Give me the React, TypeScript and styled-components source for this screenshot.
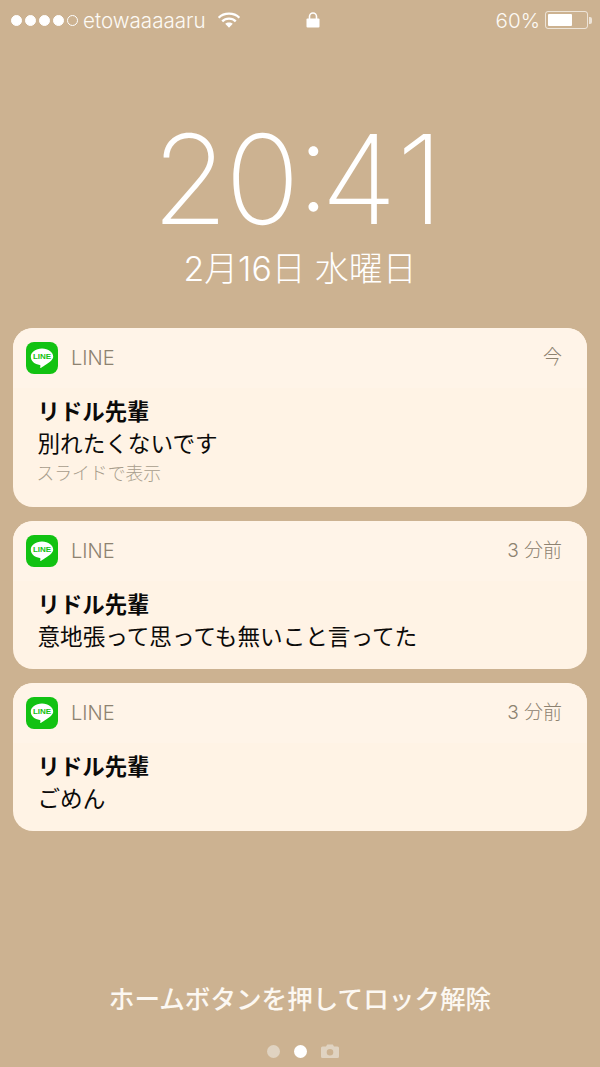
import React from "react";
import styled, { createGlobalStyle } from "styled-components";

const Global = createGlobalStyle`
  html, body { margin: 0; padding: 0; background: #ccb291; }
  body { font-family: "Inter", "Noto Sans CJK JP", sans-serif; }
`;

const Screen = styled.div`
  width: 600px;
  height: 1067px;
  background: #ccb291;
  color: #fff;
  display: flex;
  flex-direction: column;
  overflow: hidden;
`;

const StatusBar = styled.div`
  height: 40px;
  padding: 0 8px 0 11px;
  display: grid;
  grid-template-columns: 295px auto 1fr;
  align-items: center;
  font-size: 20.6px;
  font-weight: 300;
  color: #fdfaf5;
`;

const StatusLeft = styled.div`
  display: flex;
  align-items: center;
`;

const StatusRight = styled.div`
  display: flex;
  align-items: center;
  justify-content: flex-end;
`;

const Dot = styled.span<{ $on: boolean }>`
  width: 11px;
  height: 11px;
  margin-right: 3px;
  border-radius: 50%;
  box-sizing: border-box;
  border: 1px solid #fff;
  background: ${(p) => (p.$on ? "#fff" : "transparent")};
`;

const Carrier = styled.span`
  margin: 0 11px 0 2px;
`;

const Percent = styled.span`
  margin-right: 5px;
`;

const Battery = styled.span`
  width: 43px;
  height: 18px;
  box-sizing: border-box;
  border: 1.5px solid rgba(255, 255, 255, 0.65);
  border-radius: 3px;
  padding: 2px;
  display: flex;
`;

const BatteryFill = styled.span`
  width: 24px;
  background: #fff;
  border-radius: 1px;
`;

const BatteryTip = styled.span`
  width: 3px;
  height: 7px;
  margin-left: 1px;
  border-radius: 0 2px 2px 0;
  background: rgba(255, 255, 255, 0.65);
`;

const Clock = styled.div`
  margin-top: 76px;
  height: 126px;
  line-height: 126px;
  padding-right: 8px;
  text-align: center;
  font-family: "Inter", sans-serif;
  font-size: 124px;
  font-weight: 200;
  letter-spacing: -3.5px;
  font-feature-settings: "case";
`;

const ClockColon = styled.span`
  margin-right: -6px;
`;

const ClockOne = styled.span`
  margin-left: 3px;
`;

const DateLine = styled.div`
  margin-top: 5px;
  height: 44px;
  line-height: 44px;
  text-align: center;
  font-family: "Inter", "Noto Sans CJK JP", sans-serif;
  font-size: 33.8px;
  font-weight: 300;
`;

const List = styled.div`
  margin-top: 37px;
  padding: 0 13px;
  display: flex;
  flex-direction: column;
  gap: 14px;
`;

const Card = styled.div`
  background: #fff3e5;
  border-radius: 20px;
  overflow: hidden;
  color: #0b0a09;
`;

const CardHead = styled.div`
  height: 60px;
  padding: 0 25px 0 13px;
  display: flex;
  align-items: center;
  background: #fff4e8;
  color: #8d8270;
`;

const AppName = styled.span`
  margin-left: 13px;
  flex: 1;
  font-size: 20px;
  font-weight: 300;
`;

const When = styled.span`
  margin-bottom: 6px;
  font-size: 19px;
  font-weight: 300;
  font-family: "Inter", "Noto Sans CJK JP", sans-serif;
`;

const CardBody = styled.div`
  padding: 8px 25px 17px 24.5px;
`;

const Sender = styled.div`
  height: 32px;
  line-height: 32px;
  font-size: 22.4px;
  font-weight: 700;
`;

const Message = styled.div`
  height: 31px;
  line-height: 31px;
  font-size: 22.6px;
  font-weight: 400;
`;

const Hint = styled.div`
  height: 31px;
  line-height: 29px;
  margin-left: -1px;
  font-size: 17.8px;
  font-weight: 300;
  color: #a89d8c;
`;

const Unlock = styled.div`
  margin-top: auto;
  height: 40px;
  line-height: 40px;
  text-align: center;
  font-size: 25.6px;
  font-weight: 500;
  color: #fcf8f2;
`;

const Pager = styled.div`
  height: 32px;
  display: flex;
  justify-content: center;
  align-items: center;
  gap: 14px;
  padding-left: 5px;
  margin-top: 15px;
`;

const PageDot = styled.span<{ $on?: boolean }>`
  width: 13px;
  height: 13px;
  border-radius: 50%;
  background: ${(p) => (p.$on ? "#fff" : "#e0d3c1")};
`;

const LineIcon = () => (
  <svg width="32" height="32" viewBox="0 0 32 32">
    <rect width="32" height="32" rx="8" fill="#12c212" />
    <path
      d="M16 6.500c-6.400 0-11.200 3.700-11.200 8.300 0 4.100 3.800 7.500 9 8.200.5.100.7.400.6 1l-.2 1.300c-.100.600.4.800 1 .4 2.400-1.400 8.200-5 10.300-7.400 1.100-1.300 1.700-2.400 1.700-3.500 0-4.600-4.800-8.300-11.200-8.300z"
      fill="#fff"
    />
    <text
      x="16"
      y="17.400"
      textAnchor="middle"
      fontFamily="Liberation Sans, sans-serif"
      fontWeight="700"
      fontSize="8"
      fill="#12c212"
    >
      LINE
    </text>
  </svg>
);

const notes = [
  { when: "今", msg: "別れたくないです", hint: "スライドで表示" },
  { when: "3 分前", msg: "意地張って思っても無いこと言ってた" },
  { when: "3 分前", msg: "ごめん" },
];

export default function App() {
  return (
    <Screen>
      <Global />
      <StatusBar>
        <StatusLeft>
          {[1, 1, 1, 1, 0].map((v, i) => (
            <Dot key={i} $on={!!v} />
          ))}
          <Carrier>etowaaaaaru</Carrier>
          <svg width="24" height="18" viewBox="0 0 26 20">
            <path
              d="M1.500 7.500C7.500 1.500 18.500 1.500 24.500 7.500M5.500 11.500C9.500 7.500 16.500 7.500 20.500 11.500"
              fill="none"
              stroke="#fff"
              strokeWidth="2.6"
            />
            <path d="M8.800 14.200C11 12.400 15 12.400 17.200 14.200L13 18.500z" fill="#fff" />
          </svg>
        </StatusLeft>
        <svg width="14" height="16" viewBox="0 0 14 16">
          <path d="M3.500 7V4.500a3.500 3.500 0 0 1 7 0V7" fill="none" stroke="#fff" strokeWidth="1.6" />
          <rect x="0.500" y="6.500" width="13" height="9" rx="1" fill="#fff" />
        </svg>
        <StatusRight>
          <Percent>60%</Percent>
          <Battery>
            <BatteryFill />
          </Battery>
          <BatteryTip />
        </StatusRight>
      </StatusBar>
      <Clock>
        20<ClockColon>:</ClockColon>4<ClockOne>1</ClockOne>
      </Clock>
      <DateLine>2月16日 水曜日</DateLine>
      <List>
        {notes.map((n, i) => (
          <Card key={i}>
            <CardHead>
              <LineIcon />
              <AppName>LINE</AppName>
              <When>{n.when}</When>
            </CardHead>
            <CardBody>
              <Sender>リドル先輩</Sender>
              <Message>{n.msg}</Message>
              {n.hint && <Hint>{n.hint}</Hint>}
            </CardBody>
          </Card>
        ))}
      </List>
      <Unlock>ホームボタンを押してロック解除</Unlock>
      <Pager>
        <PageDot />
        <PageDot $on />
        <svg width="18" height="14" viewBox="0 0 18 14">
          <path
            fillRule="evenodd"
            d="M1.500 2.500H5L6.200.500h5.600L13 2.500h3.500A1.500 1.500 0 0 1 18 4v8.500a1.500 1.500 0 0 1-1.500 1.500h-15A1.500 1.500 0 0 1 0 12.500V4a1.500 1.500 0 0 1 1.500-1.500zM9 5a3.300 3.300 0 1 0 0 6.600A3.300 3.300 0 0 0 9 5z"
            fill="#e0d3c1"
          />
        </svg>
      </Pager>
    </Screen>
  );
}
